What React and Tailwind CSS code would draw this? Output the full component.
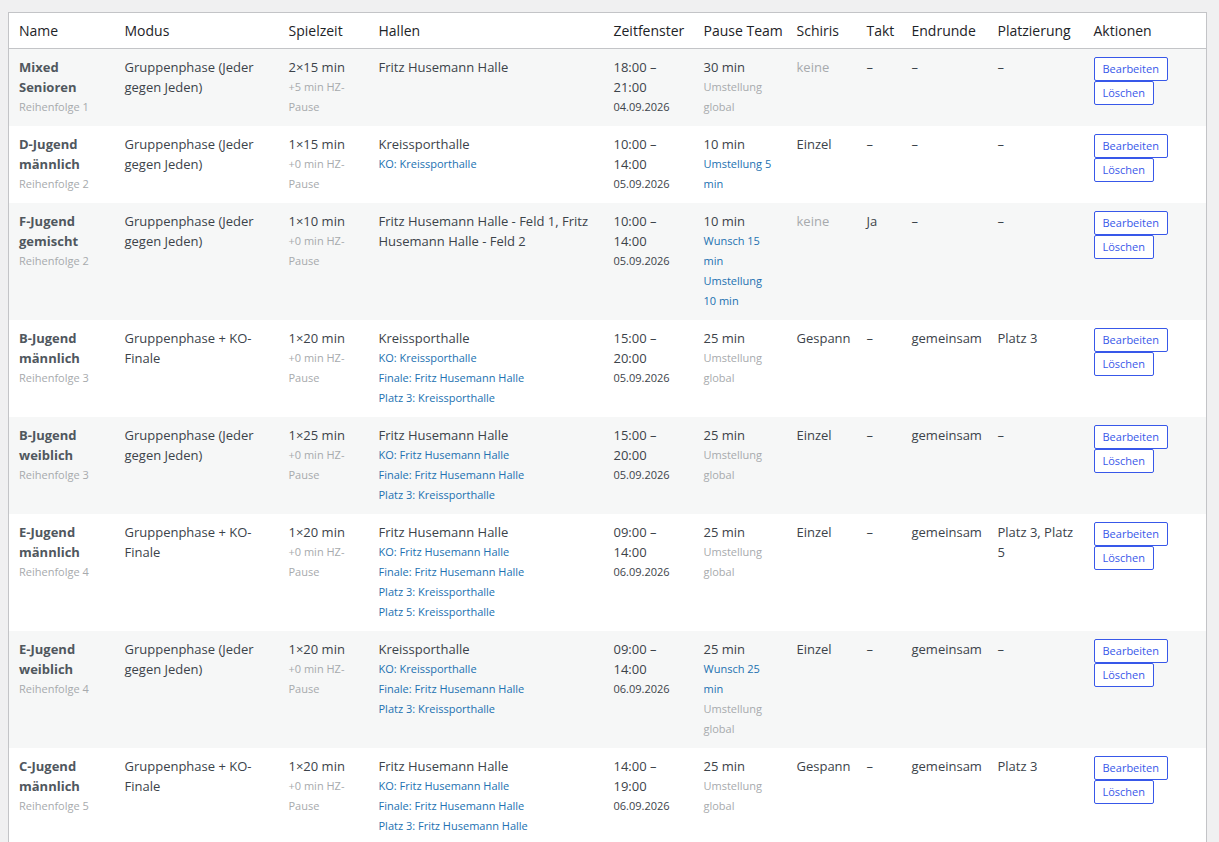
const rows = [
  { n: ["Mixed", "Senioren"], r: 1, m: "Gruppenphase (Jeder gegen Jeden)", s: "2×15 min", hz: "+5 min HZ-Pause", h: "Fritz Husemann Halle", hl: [], t: ["18:00 –", "21:00"], d: "04.09.2026", p: "30 min", pl: [["Umstellung global", "g"]], sch: "keine", schG: true, takt: "–", e: "–", pz: "–" },
  { n: ["D-Jugend", "männlich"], r: 2, m: "Gruppenphase (Jeder gegen Jeden)", s: "1×15 min", hz: "+0 min HZ-Pause", h: "Kreissporthalle", hl: ["KO: Kreissporthalle"], t: ["10:00 –", "14:00"], d: "05.09.2026", p: "10 min", pl: [["Umstellung 5 min", "b"]], sch: "Einzel", takt: "–", e: "–", pz: "–" },
  { n: ["F-Jugend", "gemischt"], r: 2, m: "Gruppenphase (Jeder gegen Jeden)", s: "1×10 min", hz: "+0 min HZ-Pause", h: "Fritz Husemann Halle - Feld 1, Fritz Husemann Halle - Feld 2", hl: [], t: ["10:00 –", "14:00"], d: "05.09.2026", p: "10 min", pl: [["Wunsch 15 min", "b"], ["Umstellung 10 min", "b"]], sch: "keine", schG: true, takt: "Ja", e: "–", pz: "–" },
  { n: ["B-Jugend", "männlich"], r: 3, m: "Gruppenphase + KO-Finale", s: "1×20 min", hz: "+0 min HZ-Pause", h: "Kreissporthalle", hl: ["KO: Kreissporthalle", "Finale: Fritz Husemann Halle", "Platz 3: Kreissporthalle"], t: ["15:00 –", "20:00"], d: "05.09.2026", p: "25 min", pl: [["Umstellung global", "g"]], sch: "Gespann", takt: "–", e: "gemeinsam", pz: "Platz 3" },
  { n: ["B-Jugend", "weiblich"], r: 3, m: "Gruppenphase (Jeder gegen Jeden)", s: "1×25 min", hz: "+0 min HZ-Pause", h: "Fritz Husemann Halle", hl: ["KO: Fritz Husemann Halle", "Finale: Fritz Husemann Halle", "Platz 3: Kreissporthalle"], t: ["15:00 –", "20:00"], d: "05.09.2026", p: "25 min", pl: [["Umstellung global", "g"]], sch: "Einzel", takt: "–", e: "gemeinsam", pz: "–" },
  { n: ["E-Jugend", "männlich"], r: 4, m: "Gruppenphase + KO-Finale", s: "1×20 min", hz: "+0 min HZ-Pause", h: "Fritz Husemann Halle", hl: ["KO: Fritz Husemann Halle", "Finale: Fritz Husemann Halle", "Platz 3: Kreissporthalle", "Platz 5: Kreissporthalle"], t: ["09:00 –", "14:00"], d: "06.09.2026", p: "25 min", pl: [["Umstellung global", "g"]], sch: "Einzel", takt: "–", e: "gemeinsam", pz: "Platz 3, Platz 5" },
  { n: ["E-Jugend", "weiblich"], r: 4, m: "Gruppenphase (Jeder gegen Jeden)", s: "1×20 min", hz: "+0 min HZ-Pause", h: "Kreissporthalle", hl: ["KO: Kreissporthalle", "Finale: Fritz Husemann Halle", "Platz 3: Kreissporthalle"], t: ["09:00 –", "14:00"], d: "06.09.2026", p: "25 min", pl: [["Wunsch 25 min", "b"], ["Umstellung global", "g"]], sch: "Einzel", takt: "–", e: "gemeinsam", pz: "–" },
  { n: ["C-Jugend", "männlich"], r: 5, m: "Gruppenphase + KO-Finale", s: "1×20 min", hz: "+0 min HZ-Pause", h: "Fritz Husemann Halle", hl: ["KO: Fritz Husemann Halle", "Finale: Fritz Husemann Halle", "Platz 3: Fritz Husemann Halle"], t: ["14:00 –", "19:00"], d: "06.09.2026", p: "25 min", pl: [["Umstellung global", "g"]], sch: "Gespann", takt: "–", e: "gemeinsam", pz: "Platz 3" },
];

const widths = [106, 164, 90, 235, 90, 93, 70, 45, 86, 96, 123];
const heads = ["Name", "Modus", "Spielzeit", "Hallen", "Zeitfenster", "Pause Team", "Schiris", "Takt", "Endrunde", "Platzierung", "Aktionen"];
const td = "align-top px-[10px] pt-[8px] pb-[9px]";

export default function App() {
  return (
    <div className="min-h-[842px] bg-[#f0f0f1] pt-[12px] px-[8px] text-[13px] leading-[20px] text-[#3c434a]" style={{ fontFamily: '"Open Sans", "Noto Sans", sans-serif' }}>
      <table className="table-fixed border-collapse border border-[#c3c4c7] bg-white w-[1199px]">
        <colgroup>
          {widths.map((w, i) => <col key={i} style={{ width: w }} />)}
        </colgroup>
        <thead>
          <tr className="border-b border-[#c3c4c7]">
            {heads.map(h => <th key={h} className="text-left font-normal whitespace-nowrap px-[10px] py-[8px] text-[14px] text-[#1d2327] leading-[19px]">{h}</th>)}
          </tr>
        </thead>
        <tbody>
          {rows.map((r, i) => (
            <tr key={i} className={i % 2 === 0 ? "bg-[#f6f7f7]" : "bg-white"}>
              <td className={td}>
                <div className="font-bold text-[#50575e]">{r.n[0]}<br />{r.n[1]}</div>
                <div className="text-[11px] text-[#a7aaad]">Reihenfolge {r.r}</div>
              </td>
              <td className={td}>{r.m}</td>
              <td className={td}>
                <div>{r.s}</div>
                <div className="text-[11px] text-[#a7aaad]">{r.hz}</div>
              </td>
              <td className={td}>
                <div>{r.h}</div>
                {r.hl.map(l => <div key={l} className="text-[11px] text-[#2271b1]">{l}</div>)}
              </td>
              <td className={td}>
                <div>{r.t[0]}<br />{r.t[1]}</div>
                <div className="text-[11px]">{r.d}</div>
              </td>
              <td className={td}>
                <div>{r.p}</div>
                {r.pl.map(([l, c]) => <div key={l} className={"text-[11px] " + (c === "g" ? "text-[#a7aaad]" : "text-[#2271b1]")}>{l}</div>)}
              </td>
              <td className={td + (r.schG ? " text-[#a7aaad]" : "")}>{r.sch}</td>
              <td className={td}>{r.takt}</td>
              <td className={td}>{r.e}</td>
              <td className={td}>{r.pz}</td>
              <td className={td}>
                <div className="flex flex-col items-start">
                  <button className="h-[24px] px-[8px] text-[11px] leading-[20px] text-[#3858e9] border border-[#3858e9] rounded-[2px] bg-white">Bearbeiten</button>
                  <button className="h-[24px] px-[8px] text-[11px] leading-[20px] text-[#3858e9] border border-[#3858e9] rounded-[2px] bg-white">Löschen</button>
                </div>
              </td>
            </tr>
          ))}
        </tbody>
      </table>
    </div>
  );
}
